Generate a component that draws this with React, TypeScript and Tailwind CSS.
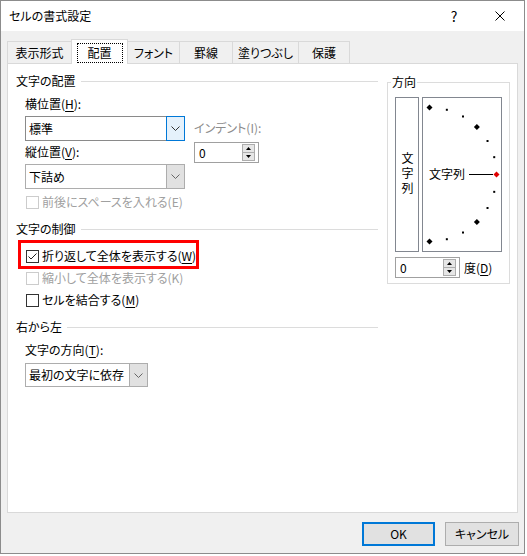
import React from "react";

const FONT = "font-['Noto_Sans_CJK_JP','Noto_Sans',sans-serif] [font-feature-settings:'palt']";

function Chevron({ color = "#333" }: { color?: string }) {
  return (
    <svg width="9" height="5" viewBox="0 0 9 5">
      <polyline points="0.5,0.5 4.5,4.5 8.5,0.5" fill="none" stroke={color} strokeWidth="1" />
    </svg>
  );
}

function Select({
  children,
  focused,
  className,
}: {
  children: React.ReactNode;
  focused?: boolean;
  className: string;
}) {
  return (
    <div className={`flex border bg-white ${focused ? "border-[#8a8a8a]" : "border-[#adadad]"} ${className}`}>
      <span className="flex flex-1 items-center pl-[3px]">{children}</span>
      {focused ? (
        <span className="-my-px -mr-px flex w-[19px] items-center justify-center border border-[#0078d7] bg-[#e5f1fb]">
          <Chevron />
        </span>
      ) : (
        <span className="flex w-[18px] items-center justify-center border-l border-[#adadad] bg-[#e1e1e1]">
          <Chevron color="#666" />
        </span>
      )}
    </div>
  );
}

function Spin({ className = "" }: { className?: string }) {
  return (
    <div className={`flex h-[21px] w-[65px] items-center border border-[#a0a0a0] bg-white ${className}`}>
      <span className="flex-1 pl-[4px]">0</span>
      <div className="mr-[3px] flex h-[17px] w-[13px] flex-col">
        <div className="flex flex-1 items-center justify-center border border-[#adadad] bg-[#e6e6e6]">
          <svg width="5" height="3" viewBox="0 0 5 3">
            <polygon points="2.5,0 5,3 0,3" fill="#000" />
          </svg>
        </div>
        <div className="-mt-px flex flex-1 items-center justify-center border border-[#adadad] bg-[#e6e6e6]">
          <svg width="5" height="3" viewBox="0 0 5 3">
            <polygon points="0,0 5,0 2.5,3" fill="#000" />
          </svg>
        </div>
      </div>
    </div>
  );
}

function CheckBox({
  children,
  checked,
  disabled,
  className = "",
}: {
  children: React.ReactNode;
  checked?: boolean;
  disabled?: boolean;
  className?: string;
}) {
  return (
    <div className={`relative flex h-[22px] items-center ${className}`}>
      <span
        className={`ml-[1px] flex h-[13px] w-[13px] items-center justify-center border bg-white ${
          disabled ? "border-[#cccccc]" : "border-[#333333]"
        }`}
      >
        {checked && (
          <svg width="11" height="11" viewBox="0 0 11 11">
            <polyline points="1.5,5.5 4,8 9.5,2.5" fill="none" stroke="#222" strokeWidth="1" />
          </svg>
        )}
      </span>
      <span className={`ml-[3px] ${disabled ? "text-[#a0a0a0]" : "text-black"}`}>{children}</span>
    </div>
  );
}

function Heading({ children, className = "" }: { children: React.ReactNode; className?: string }) {
  return (
    <div className={`flex h-[16px] items-center gap-[5px] ${className}`}>
      <span>{children}</span>
      <span className="h-px flex-1 bg-[#dcdcdc]" />
    </div>
  );
}

function Dial() {
  const cx = 429.5;
  const cy = 174.5;
  const r = 67;
  const marks = [90, 75, 60, 45, 30, 15, 0, -15, -30, -45, -60, -75, -90].map((a) => {
    const rad = (a * Math.PI) / 180;
    return { a, x: cx + r * Math.cos(rad), y: cy - r * Math.sin(rad) };
  });
  return (
    <svg width="78" height="153" viewBox="423 98 78 153" className="block">
      {marks.map((m) =>
        m.a % 45 === 0 ? (
          <polygon
            key={m.a}
            points={`${m.x},${m.y - 3} ${m.x + 3},${m.y} ${m.x},${m.y + 3} ${m.x - 3},${m.y}`}
            fill={m.a === 0 ? "#e00000" : "#000"}
          />
        ) : (
          <rect key={m.a} x={m.x - 1} y={m.y - 1} width="2" height="2" fill="#000" />
        ),
      )}
      <line x1="469" y1="174.5" x2="493" y2="174.5" stroke="#000" strokeWidth="1" />
      <text x="429" y="179" fontSize="12" fill="#000">
        文字列
      </text>
    </svg>
  );
}

const tabs = [
  { label: "表示形式", w: "w-[65px]" },
  { label: "配置", w: "w-[57px]", active: true },
  { label: "フォント", w: "w-[53px]" },
  { label: "罫線", w: "w-[54px]" },
  { label: "塗りつぶし", w: "w-[67px]" },
  { label: "保護", w: "w-[52px]" },
];

export default function App() {
  return (
    <div className={`${FONT} h-[556px] w-[527px] bg-white text-[12px] leading-[16px] text-black`}>
      <div className="flex h-[554px] w-[525px] flex-col border border-[#8c8c8c]">
        {/* title bar */}
        <div className="flex h-[30px] items-center bg-white">
          <span className="pl-[8px]">セルの書式設定</span>
          <div className="ml-auto flex h-full pr-[1px]">
            <div className="flex w-[46px] items-center justify-center text-[14px]">?</div>
            <div className="flex w-[46px] items-center justify-center">
              <svg width="10" height="10" viewBox="0 0 10 10">
                <path d="M0.5 0.5 L9.5 9.5 M9.5 0.5 L0.5 9.5" stroke="#000" strokeWidth="1" />
              </svg>
            </div>
          </div>
        </div>

        <div className="flex-1 bg-[#f0f0f0] pt-[8px]">
          {/* tabs */}
          <div className="ml-[6px] flex items-end">
            {tabs.map((t, i) =>
              t.active ? (
                <div
                  key={t.label}
                  className={`relative z-10 -mb-px flex h-[25px] ${t.w} justify-center border-x border-t border-[#d9d9d9] bg-white pt-[3px] ${
                    i > 0 ? "-ml-px" : ""
                  }`}
                >
                  <span className="flex h-[20px] w-[46px] items-center justify-center border border-dotted border-black">
                    {t.label}
                  </span>
                </div>
              ) : (
                <div
                  key={t.label}
                  className={`flex h-[22px] ${t.w} items-center justify-center border-x border-t border-[#d9d9d9] bg-[#f0f0f0] ${
                    i > 0 ? "-ml-px" : ""
                  }`}
                >
                  {t.label}
                </div>
              ),
            )}
          </div>

          {/* panel */}
          <div className="ml-[6px] flex h-[450px] w-[511px] border border-[#d9d9d9] bg-white">
            <div className="w-[370px] pl-[8px] pt-[9px]">
              <Heading>文字の配置</Heading>
              <div className="pl-[9px]">
                <div className="mt-[7px] flex">
                  <div className="w-[160px]">
                    <div>
                      横位置(<span className="underline underline-offset-2">H</span>):
                    </div>
                    <Select focused className="mt-[4px] h-[25px] w-[160px]">
                      標準
                    </Select>
                    <div className="mt-[3px]">
                      縦位置(<span className="underline underline-offset-2">V</span>):
                    </div>
                    <Select className="mt-[4px] h-[25px] w-[160px]">下詰め</Select>
                  </div>
                  <div className="ml-[9px] pt-[24px]">
                    <div className="text-[#8c8c8c]">インデント(I):</div>
                    <Spin className="mt-[6px]" />
                  </div>
                </div>
                <CheckBox disabled className="mt-[2px]">
                  前後にスペースを入れる(E)
                </CheckBox>
              </div>

              <Heading className="mt-[8px]">文字の制御</Heading>
              <div className="mt-[8px] pl-[9px]">
                <CheckBox checked>
                  折り返して全体を表示する(<span className="underline underline-offset-2">W</span>)
                  <span className="pointer-events-none absolute left-[-7px] top-[-5px] h-[29px] w-[181px] border-[3px] border-[#ff0000]" />
                </CheckBox>
                <CheckBox disabled>縮小して全体を表示する(K)</CheckBox>
                <CheckBox>
                  セルを結合する(<span className="underline underline-offset-2">M</span>)
                </CheckBox>
              </div>

              <Heading className="mt-[8px]">右から左</Heading>
              <div className="pl-[9px]">
                <div className="mt-[7px]">
                  文字の方向(<span className="underline underline-offset-2">T</span>):
                </div>
                <Select className="mt-[5px] h-[24px] w-[123px]">最初の文字に依存</Select>
              </div>
            </div>

            <fieldset className="ml-[9px] mt-[10px] h-[210px] w-[123px] border border-[#dcdcdc] px-[7px] pt-[7px]">
              <legend className="ml-[-4px] px-[1px]">方向</legend>
              <div className="flex gap-[3px]">
                <div className="flex h-[155px] w-[24px] items-center justify-center border border-[#828790]">
                  <span className="leading-[12px] tracking-[3px] [writing-mode:vertical-rl]">文字列</span>
                </div>
                <div className="h-[155px] w-[80px] border border-[#828790]">
                  <Dial />
                </div>
              </div>
              <div className="mt-[5px] flex items-center">
                <Spin />
                <span className="ml-[4px]">
                  度(<span className="underline underline-offset-2">D</span>)
                </span>
              </div>
            </fieldset>
          </div>

          {/* buttons */}
          <div className="mt-[9px] flex justify-end gap-[10px] pr-[5px]">
            <button className="flex h-[24px] w-[73px] items-center justify-center border-2 border-[#0078d7] bg-[#e1e1e1]">
              OK
            </button>
            <button className="flex h-[24px] w-[74px] items-center justify-center border border-[#adadad] bg-[#e1e1e1]">
              キャンセル
            </button>
          </div>
        </div>
      </div>
    </div>
  );
}
